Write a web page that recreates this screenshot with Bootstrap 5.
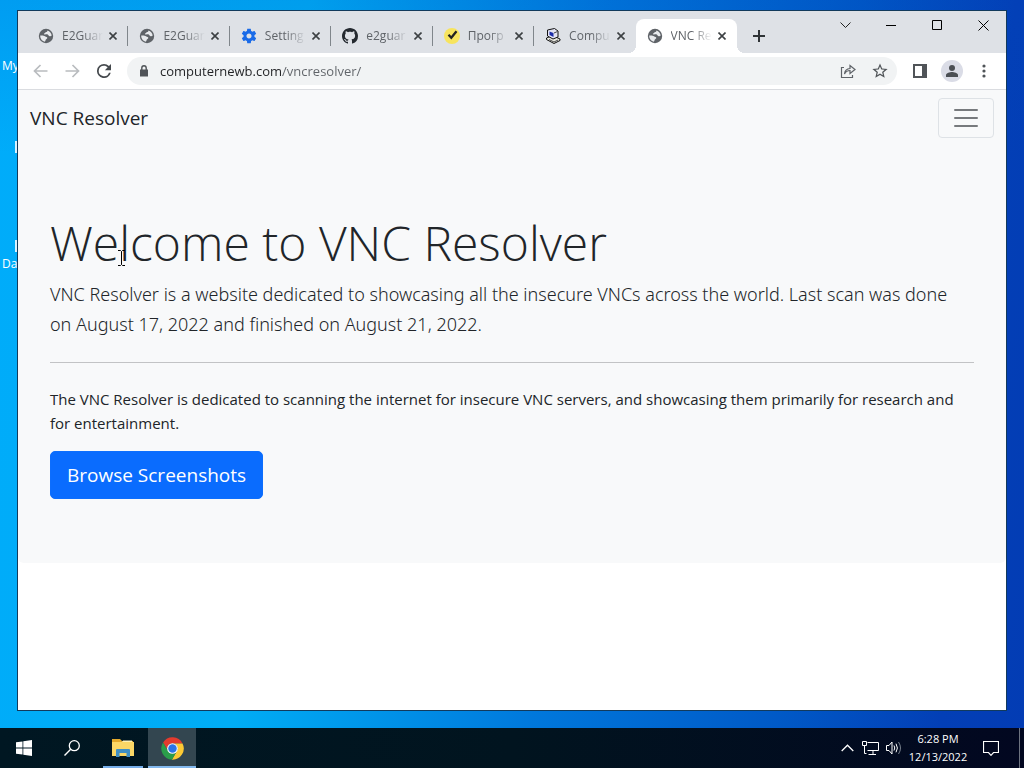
<!DOCTYPE html>
<html lang="en">
<head>
<meta charset="utf-8">
<meta name="viewport" content="width=device-width, initial-scale=1">
<title>VNC Resolver</title>
<link href="https://cdn.jsdelivr.net/npm/bootstrap@5.3.0/dist/css/bootstrap.min.css" rel="stylesheet">
<style>
  body { font-family: "Open Sans", "Noto Sans", sans-serif; color: #212529; }
  button.plain, a.plain { border: 0; background: transparent; padding: 0; display: flex; align-items: center; justify-content: center; flex: none; }
  svg { display: block; flex: none; }

  .desktop { background: linear-gradient(180deg, rgba(0,70,190,.15), rgba(0,70,190,0) 20%), linear-gradient(96deg, #00acfa 0%, #00adf5 28%, #0078dc 55%, #0058c6 78%, #033fb6 92%, #033cb4 100%); }
  .workspace { padding: 10px 17px 17px; }
  .shortcut { position: absolute; left: 2px; width: 76px; color: #fff; font-size: 12px; line-height: 16px; }
  .shortcut i { display: block; width: 46px; height: 12px; margin: 0 0 4px 13px; background: #d8f2ff; }

  .window { border: 1px solid #123a5c; z-index: 1; }
  .titlebar { background: #dee1e6; height: 42px; }
  .tabs { width: 710px; margin-left: 9px; padding: 0; list-style: none; }
  .tab { flex: 1 1 0; min-width: 0; gap: 6px; padding: 0 11px 0 11px; margin-top: 8px; height: 34px; position: relative; }
  .tab a { min-width: 0; flex: 1; gap: 8px; font-size: 12px; line-height: 16px; color: #5f6368; text-decoration: none; }
  .tab span { overflow: hidden; white-space: nowrap; flex: 1; -webkit-mask-image: linear-gradient(90deg, #000 50%, transparent); mask-image: linear-gradient(90deg, #000 50%, transparent); }
  .tab.divided::after { content: ""; position: absolute; right: 0; top: 7px; width: 1px; height: 20px; background: #80868b; }
  .tab.current { background: #fff; border-radius: 8px 8px 0 0; }
  .tab.current::before, .tab.current::after { content: ""; position: absolute; bottom: 0; width: 8px; height: 8px; }
  .tab.current::before { left: -8px; background: radial-gradient(circle at 0 0, transparent 8px, #fff 8px); }
  .tab.current::after { right: -8px; background: radial-gradient(circle at 100% 0, transparent 8px, #fff 8px); }
  .new-tab { width: 28px; height: 28px; margin: 11px 0 0 8px; }
  .caption { width: 46px; height: 28px; }

  .toolbar { height: 37px; border-bottom: 1px solid #dadce0; padding: 0 6px; background: #fff; }
  .tool { width: 32px; height: 28px; }
  .address { height: 28px; border-radius: 14px; background: #f1f3f4; margin: 0 7px 0 7px; padding: 0 1px 0 11px; }
  .address input { border: 0; outline: 0; padding: 0; margin-left: 10px; min-width: 0; font-size: 13px; line-height: 20px; color: transparent; background: linear-gradient(90deg, #202124 121px, #5f6368 121px); -webkit-background-clip: text; background-clip: text; }
  .avatar { width: 22px; height: 22px; border-radius: 50%; background: #dadce6; }

  .site-nav { --bs-navbar-brand-color: #212529; --bs-navbar-toggler-border-color: #dee2e6; --bs-navbar-toggler-border-radius: 4px; }
  .site-brand { font-size: 19px; }
  .hero { padding: 64px 32px; }
  .hero h1 { font-size: 48px; line-height: 65px; font-weight: 300; margin-bottom: 4px; }
  .intro { font-family: "Noto Sans", "Open Sans", sans-serif; font-size: 18px; line-height: 30px; font-weight: 300; margin-bottom: 0; }
  .hero hr { color: #212529; margin: 23px 0 24px; }
  .about { font-size: 15px; line-height: 24px; }
  .browse { font-size: 19px; line-height: 30px; border-radius: 5px; --bs-btn-bg: #0a6cfe; }
  .navbar-toggler-icon { opacity: .8; }
  .ibeam { position: absolute; left: 99px; top: 160px; }

  .taskbar { height: 40px; background: linear-gradient(90deg, #001722, #01141f 50%, #020720); color: #fff; }
  .task { width: 48px; height: 40px; }
  .task.opened { width: 40px; margin: 0 5px 0 7px; box-shadow: inset 0 -2px #76aeea; }
  .task.focused { background: #334650; box-shadow: inset 0 -2px #82b8ee; }
  .task.notices { padding-right: 8px; }
  .tray { width: 23px; height: 40px; }
  .clock { font-size: 11px; line-height: 18px; width: 66px; }
  .peek { width: 5px; border-left: 1px solid #6d7380; }
</style>
</head>
<body>
<svg width="0" height="0" class="position-absolute" aria-hidden="true">
  <symbol id="globe" viewBox="0 0 16 16"><circle cx="8" cy="8" r="7.2" fill="#5f6368"/><path d="M2.200 7.600C4 7.400 6 7.500 7 8.300c.9.700 2.300.4 2.300 1.700 0 1.100-1.600.9-1.700 2 0 .7-.3 1.200-1 1.700C4 13.200 2.100 10.600 2.200 7.600zM9.300 2.400c.4.900-.4 1.500-1.200 1.700-.8.300-.9 1.100-1.800 1.300-.6.200-.5.900.3 1.100 1 .2 2.300-.5 3.100 0 .9.600.9 1.600 2 1.700 1 .1 1.300-.5 2-.5C13.500 5 11.900 3.100 9.300 2.400z" fill="#e8eaed"/></symbol>
  <symbol id="cross" viewBox="0 0 8 8"><path d="M.5.5l7 7M7.500.5l-7 7" stroke="#3c4043" stroke-width="1.600"/></symbol>
</svg>

<div class="desktop d-flex flex-column min-vh-100 position-relative overflow-hidden">
  <div class="shortcut" style="top:58px">My PC</div>
  <div class="shortcut" style="top:141px"><i></i></div>
  <div class="shortcut" style="top:240px"><i></i>Data</div>

  <div class="workspace d-flex flex-column flex-grow-1">
    <section class="window d-flex flex-column flex-grow-1 bg-white" aria-label="Browser">
      <header class="titlebar d-flex align-items-start">
        <ul class="tabs d-flex mb-0">
          <li class="tab divided d-flex align-items-center"><a href="#" class="d-flex align-items-center"><svg width="16" height="16"><use href="#globe"/></svg><span>E2Guar</span></a><button class="plain" aria-label="Close tab"><svg width="8" height="8"><use href="#cross"/></svg></button></li>
          <li class="tab divided d-flex align-items-center"><a href="#" class="d-flex align-items-center"><svg width="16" height="16"><use href="#globe"/></svg><span>E2Guar</span></a><button class="plain" aria-label="Close tab"><svg width="8" height="8"><use href="#cross"/></svg></button></li>
          <li class="tab divided d-flex align-items-center"><a href="#" class="d-flex align-items-center"><svg width="16" height="16" viewBox="1 1 22 22"><path fill="#1a6be8" d="M19.430 12.980c.04-.32.07-.64.07-.98s-.03-.66-.07-.98l2.110-1.650c.19-.15.24-.42.12-.64l-2-3.460c-.12-.22-.39-.3-.61-.22l-2.490 1c-.52-.4-1.080-.73-1.690-.98l-.38-2.650C14.460 2.180 14.250 2 14 2h-4c-.25 0-.46.18-.49.42l-.38 2.650c-.61.25-1.170.59-1.690.98l-2.490-1c-.23-.09-.49 0-.61.22l-2 3.460c-.13.22-.07.49.12.64l2.110 1.650c-.04.32-.07.65-.07.98s.03.66.07.98l-2.110 1.650c-.19.15-.24.42-.12.64l2 3.460c.12.22.39.3.61.22l2.490-1c.52.4 1.080.73 1.690.98l.38 2.650c.03.24.24.42.49.42h4c.25 0 .46-.18.49-.42l.38-2.650c.61-.25 1.170-.59 1.690-.98l2.490 1c.23.09.49 0 .61-.22l2-3.460c.12-.22.07-.49-.12-.64l-2.110-1.650zM12 15.500c-1.930 0-3.500-1.570-3.500-3.500s1.570-3.500 3.500-3.500 3.500 1.570 3.500 3.500-1.570 3.500-3.500 3.500z"/></svg><span>Setting</span></a><button class="plain" aria-label="Close tab"><svg width="8" height="8"><use href="#cross"/></svg></button></li>
          <li class="tab divided d-flex align-items-center"><a href="#" class="d-flex align-items-center"><svg width="16" height="16" viewBox="0 0 16 16"><path fill="#24292f" d="M8 0C3.580 0 0 3.580 0 8c0 3.540 2.290 6.530 5.470 7.590.4.070.55-.17.55-.38 0-.19-.01-.82-.01-1.490-2.010.37-2.530-.49-2.690-.94-.09-.23-.48-.94-.82-1.130-.28-.15-.68-.52-.01-.53.63-.01 1.080.58 1.230.82.72 1.210 1.870.87 2.330.66.070-.52.280-.87.510-1.070-1.780-.2-3.640-.89-3.640-3.950 0-.87.310-1.590.82-2.150-.08-.2-.36-1.020.08-2.120 0 0 .67-.21 2.200.82.64-.18 1.320-.27 2-.27s1.360.09 2 .27c1.530-1.040 2.200-.82 2.200-.82.44 1.100.16 1.920.08 2.120.51.56.82 1.270.82 2.150 0 3.070-1.870 3.750-3.650 3.950.29.25.54.73.54 1.480 0 1.070-.01 1.930-.01 2.200 0 .21.150.46.550.38A8.010 8.010 0 0 0 16 8c0-4.420-3.580-8-8-8z"/></svg><span>e2guar</span></a><button class="plain" aria-label="Close tab"><svg width="8" height="8"><use href="#cross"/></svg></button></li>
          <li class="tab divided d-flex align-items-center"><a href="#" class="d-flex align-items-center"><svg width="16" height="16" viewBox="0 0 16 16"><circle cx="8" cy="8" r="8" fill="#f7e45e"/><path d="M4.500 6.800L7.300 9.800 12.500 3.200" fill="none" stroke="#222" stroke-width="2.300"/></svg><span>Прогр</span></a><button class="plain" aria-label="Close tab"><svg width="8" height="8"><use href="#cross"/></svg></button></li>
          <li class="tab d-flex align-items-center"><a href="#" class="d-flex align-items-center"><svg width="16" height="16" viewBox="0 0 16 16"><path d="M1.500 10l6-2.500L15 11v1.500L9 15.500l-7.500-4z" fill="#e8e8e0" stroke="#111"/><path d="M2.500 2L9.500.5 13 3v6l-5 2-5.500-3z" fill="#e4e4f4" stroke="#111"/><path d="M4.500 3.500l4 1.500v4l-4-2z" fill="#1c2ca8"/><path d="M9 5l3.500-1.500M4 11.500l5 2.500 4-2" stroke="#444" fill="none"/></svg><span>Compu</span></a><button class="plain" aria-label="Close tab"><svg width="8" height="8"><use href="#cross"/></svg></button></li>
          <li class="tab current d-flex align-items-center"><a href="#" class="d-flex align-items-center" aria-current="page"><svg width="16" height="16"><use href="#globe"/></svg><span>VNC Re</span></a><button class="plain" aria-label="Close tab"><svg width="8" height="8"><use href="#cross"/></svg></button></li>
        </ul>
        <button class="plain new-tab" aria-label="New tab"><svg width="12" height="12" viewBox="0 0 12 12"><path d="M6 0v12M0 6h12" stroke="#2f3336" stroke-width="2"/></svg></button>
        <div class="d-flex ms-auto">
          <button class="plain caption" aria-label="Search tabs"><svg width="11" height="7" viewBox="0 0 11 7"><path d="M.5.5l5 5 5-5" fill="none" stroke="#222"/></svg></button>
          <button class="plain caption" aria-label="Minimize"><svg width="10" height="10" viewBox="0 0 10 10"><path d="M0 5.500h10" stroke="#000"/></svg></button>
          <button class="plain caption" aria-label="Maximize"><svg width="10" height="10" viewBox="0 0 10 10"><path d="M.5.5h9v9h-9z" fill="none" stroke="#000"/></svg></button>
          <button class="plain caption" aria-label="Close"><svg width="11" height="11" viewBox="0 0 11 11"><path d="M.5.5l10 10M10.500.5l-10 10" stroke="#000"/></svg></button>
        </div>
      </header>

      <div class="toolbar d-flex align-items-center">
        <button class="plain tool" aria-label="Back"><svg width="15" height="14" viewBox="0 0 15 14"><path d="M14.500 7H1.500M7.500 1l-6 6 6 6" fill="none" stroke="#b9bcbf" stroke-width="1.700"/></svg></button>
        <button class="plain tool" aria-label="Forward"><svg width="15" height="14" viewBox="0 0 15 14"><path d="M.5 7h13M7.500 1l6 6-6 6" fill="none" stroke="#b9bcbf" stroke-width="1.700"/></svg></button>
        <button class="plain tool" aria-label="Reload"><svg width="14" height="14" viewBox="4 4 16 16"><path fill="#45494d" d="M17.650 6.350A7.960 7.960 0 0 0 12 4a8 8 0 1 0 7.730 10h-2.080A6 6 0 1 1 12 6c1.660 0 3.140.69 4.220 1.780L13 11h7V4z"/></svg></button>
        <form class="address d-flex align-items-center flex-grow-1">
          <svg width="12" height="12" viewBox="0 0 12 12"><path fill="#505458" d="M2 4.500h8v7H2z"/><path d="M3.800 5V3a2.200 2.200 0 0 1 4.400 0v2" fill="none" stroke="#505458" stroke-width="1.400"/></svg>
          <input class="flex-grow-1" type="text" aria-label="Address" value="computernewb.com/vncresolver/">
          <button type="button" class="plain tool" aria-label="Share"><svg width="16" height="16" viewBox="0 0 16 16"><path d="M4 4.500H1.500v10h11V12M4.500 11c.3-3.700 2.300-5.300 5.500-5.500V2.500L15 6.500l-5 4v-3c-2.500 0-4.200 1-5.500 3.500z" fill="none" stroke="#5f6368" stroke-width="1.200"/></svg></button>
          <button type="button" class="plain tool" aria-label="Bookmark this page"><svg width="16" height="16" viewBox="1.500 1.500 21 21"><path fill="#505458" d="M22 9.240l-7.190-.62L12 2 9.190 8.630 2 9.240l5.460 4.730L5.820 21 12 17.270 18.180 21l-1.630-7.030L22 9.240zM12 15.400l-3.760 2.270 1-4.280-3.320-2.880 4.380-.38L12 6.100l1.710 4.040 4.380.38-3.320 2.880 1 4.280L12 15.400z"/></svg></button>
        </form>
        <button class="plain tool" aria-label="Side panel"><svg width="14" height="14" viewBox="0 0 14 14"><path d="M0 0h14v14H0zM2 2v10h7V2z" fill="#505458" fill-rule="evenodd"/></svg></button>
        <button class="plain tool" aria-label="Profile"><span class="avatar d-flex align-items-center justify-content-center"><svg width="12" height="12" viewBox="0 0 12 12"><circle cx="6" cy="3" r="3" fill="#4b4f54"/><path d="M0 12v-2c0-2 4-3 6-3s6 1 6 3v2z" fill="#4b4f54"/></svg></span></button>
        <button class="plain tool" aria-label="Menu"><svg width="4" height="14" viewBox="0 0 4 14"><g fill="#505458"><circle cx="2" cy="2" r="1.600"/><circle cx="2" cy="7" r="1.600"/><circle cx="2" cy="12" r="1.600"/></g></svg></button>
      </div>

      <main class="position-relative">
        <nav class="navbar site-nav bg-light">
          <div class="container-fluid">
            <a class="navbar-brand site-brand" href="#">VNC Resolver</a>
            <button class="navbar-toggler" type="button" aria-label="Toggle navigation"><span class="navbar-toggler-icon"></span></button>
          </div>
        </nav>
        <div class="hero bg-light rounded-bottom">
          <h1>Welcome to VNC Resolver</h1>
          <p class="intro">VNC Resolver is a website dedicated to showcasing all the insecure VNCs across the world. Last scan was done on&nbsp;August 17, 2022 and finished on August 21, 2022.</p>
          <hr>
          <p class="about">The VNC Resolver is dedicated to scanning the internet for insecure VNC servers, and showcasing them primarily for research and for entertainment.</p>
          <a class="btn btn-primary btn-lg browse" href="#" role="button">Browse Screenshots</a>
        </div>
        <svg class="ibeam" width="9" height="16" viewBox="0 0 9 16" aria-hidden="true"><path d="M1 .5h2.500l1 1 1-1H8M4.500 1.500v13M1 15.500h2.500l1-1 1 1H8" fill="none" stroke="#000"/></svg>
      </main>
    </section>
  </div>

  <footer class="taskbar d-flex align-items-center">
    <button class="plain task" aria-label="Start"><svg width="16" height="16" viewBox="0 0 16 16"><path fill="#fff" d="M0 2.300L6.500 1.400v6.200H0zM7.300 1.300L16 0v7.600H7.300zM0 8.400h6.500v6.200L0 13.700zM7.300 8.400H16V16l-8.700-1.300z"/></svg></button>
    <button class="plain task" aria-label="Search"><svg width="16" height="16" viewBox="0 0 16 16"><circle cx="10.300" cy="5.700" r="5" fill="none" stroke="#fff" stroke-width="1.300"/><path d="M6.700 9.300L.5 15.500" stroke="#fff" stroke-width="1.400"/></svg></button>
    <button class="plain task opened" aria-label="File Explorer"><svg width="22" height="18" viewBox="0 0 22 18"><path d="M0 0h8l2 2h11v4H0z" fill="#e3a92c"/><path d="M0 3h22v14H0z" fill="#fbd766"/><path d="M11 1.500h9v1.500H10z" fill="#fff1b5"/><path d="M4 18v-7q0-1 1-1h12q1 0 1 1v7h-3.500v-4h-7v4z" fill="#3f8fc4"/></svg></button>
    <button class="plain task focused" aria-label="Google Chrome"><svg width="23" height="23" viewBox="1.500 1.500 45 45"><path fill="#e33b2e" d="M43.600 14A22 22 0 0 0 5.540 12.030L15.340 29A10 10 0 0 1 24 14z"/><path fill="#fcc934" d="M43.600 14A22 22 0 0 1 22.860 45.970L32.660 29A10 10 0 0 0 24 14z"/><path fill="#2a9d4a" d="M5.540 12.030A22 22 0 0 0 22.860 45.970L32.660 29A10 10 0 0 1 15.340 29z"/><circle cx="24" cy="24" r="10.500" fill="#fff"/><circle cx="24" cy="24" r="8.300" fill="#2a74e8"/></svg></button>
    <div class="d-flex align-items-center ms-auto align-self-stretch">
      <button class="plain tray" aria-label="Show hidden icons"><svg width="13" height="8" viewBox="0 0 13 8"><path d="M.7 7l5.800-5.800L12.300 7" fill="none" stroke="#fff" stroke-width="1.300"/></svg></button>
      <button class="plain tray" aria-label="Network"><svg width="17" height="14" viewBox="0 0 17 14"><path d="M5.500 1.500h11v8h-11M.5.500h4v4h-4zM2.500 4.500v8h2M11 9.500v3.500M6.500 13.500H14" fill="none" stroke="#fff"/></svg></button>
      <button class="plain tray" aria-label="Volume"><svg width="16" height="14" viewBox="0 0 16 14"><path d="M.5 4.500h2.500l3-3.500v12l-3-3.500H.5zM8 4.500q1.500 2.500 0 5M10 2.700q2.800 4.300 0 8.600" fill="none" stroke="#fff"/><path d="M12.500 1q4 6 0 12" fill="none" stroke="#77808c"/></svg></button>
      <time class="clock text-center" datetime="2022-12-13T18:28">6:28 PM<br>12/13/2022</time>
      <button class="plain task notices" aria-label="Notifications"><svg width="16" height="16" viewBox="0 0 16 16"><path d="M.5 1.500h15v11H10.500L8 15.300 5.500 12.500h-5z" fill="none" stroke="#fff" stroke-width="1.200"/></svg></button>
      <div class="peek align-self-stretch"></div>
    </div>
  </footer>
</div>
<script src="https://cdn.jsdelivr.net/npm/bootstrap@5.3.0/dist/js/bootstrap.bundle.min.js"></script>
</body>
</html>
